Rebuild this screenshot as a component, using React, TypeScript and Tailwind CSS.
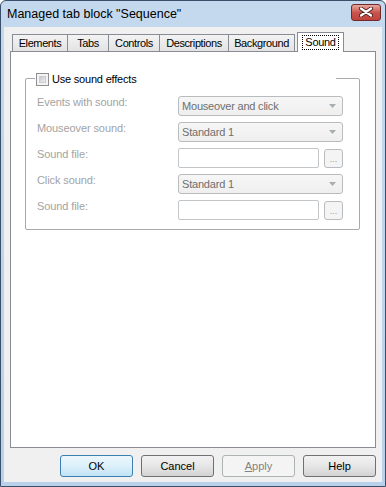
import React from "react";

const TABS = [
  { label: "Elements", w: "w-[56px]" },
  { label: "Tabs", w: "w-[42px]" },
  { label: "Controls", w: "w-[52px]" },
  { label: "Descriptions", w: "w-[70px]" },
  { label: "Background", w: "w-[67px]" },
];

function Arrow() {
  return (
    <svg width="7" height="4" viewBox="0 0 7 4" className="shrink-0">
      <path d="M0 0 L7 0 L3.5 4 Z" fill="#a8adb2" />
    </svg>
  );
}

function Combo({ value }: { value: string }) {
  return (
    <div className="w-[165px] h-[20px] rounded-[3px] border border-[#b8bcbf] bg-gradient-to-b from-[#f6f6f6] to-[#efefef] flex items-center pl-[3px] pr-[6px] text-[#6f6f6f]">
      <span className="flex-1 leading-none tracking-[-0.2px]">{value}</span>
      <Arrow />
    </div>
  );
}

function FileInput() {
  return (
    <div className="flex items-center">
      <div className="w-[141px] h-[20px] rounded-[2px] border border-[#c3c6c9] bg-white" />
      <div className="ml-[5px] w-[19px] h-[19px] rounded-[3px] border border-[#b8bcbf] bg-[#f4f4f4] flex items-end justify-center pb-[3px] text-[9px] leading-none text-[#9a9a9a]">
        ...
      </div>
    </div>
  );
}

function Row({ label, children }: { label: string; children: React.ReactNode }) {
  return (
    <div className="flex items-start h-[20px]">
      <span className="w-[141px] leading-[13px] text-[#a3a3a3] tracking-[-0.1px]">{label}</span>
      {children}
    </div>
  );
}

function DialogButton({
  children,
  variant = "normal",
}: {
  children: React.ReactNode;
  variant?: "default" | "normal" | "disabled";
}) {
  const styles = {
    default:
      "border-[#3c7fb1] bg-gradient-to-b from-[#ecf6fc] via-[#dcf0fb] to-[#c1e3f6] text-black",
    normal:
      "border-[#707070] bg-gradient-to-b from-[#f2f2f2] via-[#e6e6e6] to-[#d3d3d3] text-black",
    disabled: "border-[#adb2b5] bg-[#f4f4f4] text-[#838383]",
  }[variant];
  return (
    <div
      className={`w-[73px] h-[22px] rounded-[3px] border flex items-center justify-center ${styles}`}
    >
      {children}
    </div>
  );
}

export default function App() {
  return (
    <div className="w-[386px] h-[487px] flex flex-col border border-[#3a4f69] rounded-t-[6px] bg-gradient-to-b from-[#c4d9ee] to-[#b9d1ea] px-[3px] pb-[4px] text-[11px] text-black font-['Liberation_Sans',Arial,sans-serif] overflow-hidden">
      {/* title bar */}
      <div className="h-[26px] flex items-center shrink-0">
        <span className="pl-[3px] text-[12.5px] text-black">Managed tab block "Sequence"</span>
        <div className="ml-auto mr-[1px] -mt-[4px] w-[30px] h-[17px] rounded-[3px] border border-[#6d2b2b] bg-gradient-to-b from-[#e8a89f] via-[#c9544d] to-[#c0433c] flex items-center justify-center">
          <svg width="14" height="10" viewBox="0 0 14 10">
            <path d="M2 1.5 L12 8.5 M12 1.5 L2 8.5" stroke="#4c2020" strokeWidth="4" strokeLinecap="round" />
            <path d="M2 1.5 L12 8.5 M12 1.5 L2 8.5" stroke="#ffffff" strokeWidth="2.2" strokeLinecap="round" />
          </svg>
        </div>
      </div>

      {/* client */}
      <div className="flex-1 bg-[#f0f0f0] flex flex-col px-[6px] pt-[5px]">
        {/* tab strip */}
        <div className="flex items-end h-[19px] pl-[2px]">
          {TABS.map((t, i) => (
            <div
              key={t.label}
              className={`${t.w} h-[17px] ${i > 0 ? "-ml-px" : ""} border border-b-0 border-[#898c95] bg-gradient-to-b from-[#f3f3f3] to-[#e3e3e3] flex items-center justify-center tracking-[-0.4px]`}
            >
              {t.label}
            </div>
          ))}
          <div className="relative z-10 ml-[2px] -mb-px w-[47px] h-[20px] border border-b-0 border-[#898c95] bg-white flex items-start justify-center pt-[2px]">
            <span className="border border-dotted border-black px-[2px] leading-[13px] tracking-[-0.3px]">Sound</span>
          </div>
        </div>

        {/* tab panel */}
        <div className="h-[397px] border border-[#898c95] bg-white pl-[14px] pt-[26px]">
          <div className="relative w-[335px] h-[152px] border border-[#a9a9a9] rounded-[2px] pl-[11px] pt-[17px] flex flex-col gap-[6px]">
            <div className="absolute left-[9px] top-[-7px] w-[301px] h-[14px] bg-white flex items-center pl-px">
              <div className="w-[13px] h-[13px] border border-[#8f8f8f] bg-[#f4f4f4] p-[2px]">
                <div className="w-full h-full border border-[#c9ccd0] bg-gradient-to-br from-[#c6cacf] to-[#eceef0]" />
              </div>
              <span className="ml-[3px] text-black leading-none tracking-[-0.2px]">Use sound effects</span>
            </div>
            <Row label="Events with sound:">
              <Combo value="Mouseover and click" />
            </Row>
            <Row label="Mouseover sound:">
              <Combo value="Standard 1" />
            </Row>
            <Row label="Sound file:">
              <FileInput />
            </Row>
            <Row label="Click sound:">
              <Combo value="Standard 1" />
            </Row>
            <Row label="Sound file:">
              <FileInput />
            </Row>
          </div>
        </div>

        {/* buttons */}
        <div className="flex justify-end gap-[8px] mt-[7px]">
          <DialogButton variant="default">OK</DialogButton>
          <DialogButton>Cancel</DialogButton>
          <DialogButton variant="disabled">
            <span>
              <span className="underline">A</span>pply
            </span>
          </DialogButton>
          <DialogButton>Help</DialogButton>
        </div>
      </div>
    </div>
  );
}
